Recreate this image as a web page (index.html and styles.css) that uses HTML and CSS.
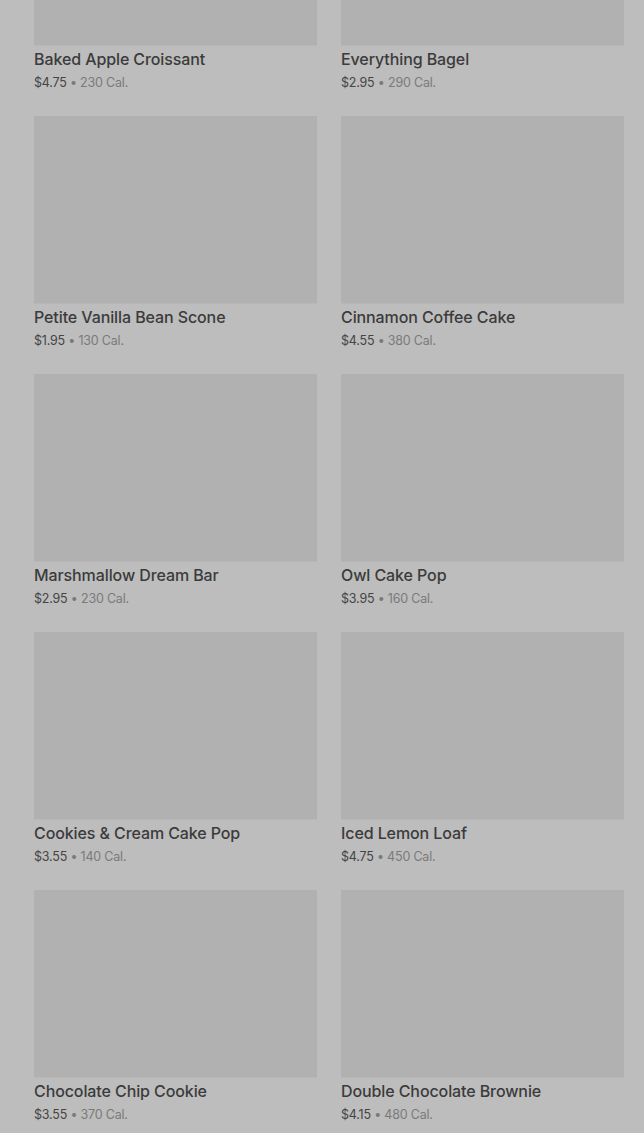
FILE: index.html
```html
<!DOCTYPE html>
<html lang="en">

<head>
    <meta charset="UTF-8">
    <meta name="viewport" content="width=device-width, initial-scale=1.0">
    <title>Bakery</title>

    <link rel="stylesheet" href="styles.css">
</head>

<body>
    <div class="menu">
        <div class="item">
            <div class="photo"></div>
            <div class="name">Baked Apple Croissant</div>
            <div class="info">$4.75 <span class="cal">• 230 Cal.</span></div>
        </div>
        <div class="item">
            <div class="photo"></div>
            <div class="name">Everything Bagel</div>
            <div class="info">$2.95 <span class="cal">• 290 Cal.</span></div>
        </div>
        <div class="item">
            <div class="photo"></div>
            <div class="name">Petite Vanilla Bean Scone</div>
            <div class="info">$1.95 <span class="cal">• 130 Cal.</span></div>
        </div>
        <div class="item">
            <div class="photo"></div>
            <div class="name">Cinnamon Coffee Cake</div>
            <div class="info">$4.55 <span class="cal">• 380 Cal.</span></div>
        </div>
        <div class="item">
            <div class="photo"></div>
            <div class="name">Marshmallow Dream Bar</div>
            <div class="info">$2.95 <span class="cal">• 230 Cal.</span></div>
        </div>
        <div class="item">
            <div class="photo"></div>
            <div class="name">Owl Cake Pop</div>
            <div class="info">$3.95 <span class="cal">• 160 Cal.</span></div>
        </div>
        <div class="item">
            <div class="photo"></div>
            <div class="name">Cookies &amp; Cream Cake Pop</div>
            <div class="info">$3.55 <span class="cal">• 140 Cal.</span></div>
        </div>
        <div class="item">
            <div class="photo"></div>
            <div class="name">Iced Lemon Loaf</div>
            <div class="info">$4.75 <span class="cal">• 450 Cal.</span></div>
        </div>
        <div class="item">
            <div class="photo"></div>
            <div class="name">Chocolate Chip Cookie</div>
            <div class="info">$3.55 <span class="cal">• 370 Cal.</span></div>
        </div>
        <div class="item">
            <div class="photo"></div>
            <div class="name">Double Chocolate Brownie</div>
            <div class="info">$4.15 <span class="cal">• 480 Cal.</span></div>
        </div>
    </div>
</body>

</html>
```

FILE: styles.css
```css
body {
    margin: 0;
    background: #bdbdbd;
    font-family: "Inter", "Noto Sans", sans-serif;
    overflow: hidden;
}

.menu {
    display: grid;
    grid-template-columns: 283px 283px;
    column-gap: 24px;
    row-gap: 24px;
    padding: 0 20px 0 34px;
    margin-top: -142px;
}

.photo {
    height: 187px;
    background: #b1b1b1;
    box-shadow: 0 1px 0 #b7b7b7;
}

.name {
    margin-top: 4px;
    font-size: 16px;
    line-height: 20px;
    font-weight: 500;
    letter-spacing: -0.1px;
    color: #3b3b3b;
}

.info {
    margin-top: 5px;
    font-size: 12.5px;
    line-height: 18px;
    letter-spacing: -0.2px;
    color: #444;
}

.cal {
    color: #7a7a7a;
}
```
